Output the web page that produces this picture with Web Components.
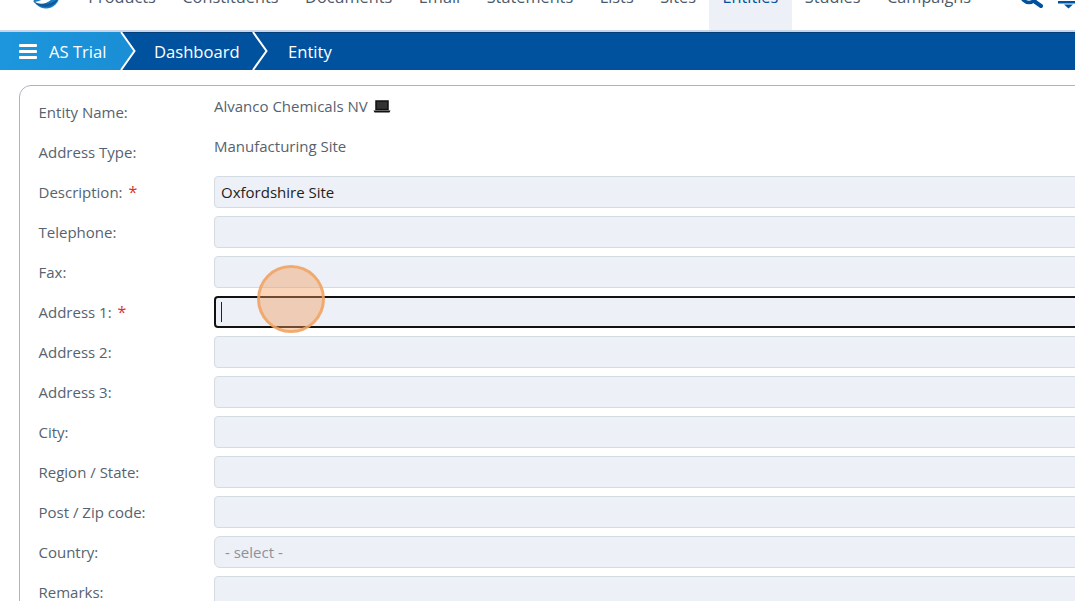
<!DOCTYPE html>
<html><head><meta charset="utf-8">
<style>
html,body{margin:0;padding:0;height:601px;overflow:hidden;background:#fff;font-family:"Open Sans",sans-serif;}
</style></head>
<body>
<app-shell>
<top-nav>
<nav-link>Products</nav-link><nav-link>Constituents</nav-link><nav-link>Documents</nav-link><nav-link>Email</nav-link><nav-link>Statements</nav-link><nav-link>Lists</nav-link><nav-link>Sites</nav-link><nav-link active>Entities</nav-link><nav-link>Studies</nav-link><nav-link>Campaigns</nav-link>
</top-nav>
<crumb-bar></crumb-bar>
<form-card>
<form-row label="Entity Name:" kind="text" value="Alvanco Chemicals NV" laptop></form-row>
<form-row label="Address Type:" kind="text" value="Manufacturing Site"></form-row>
<form-row label="Description:" required value="Oxfordshire Site"></form-row>
<form-row label="Telephone:"></form-row>
<form-row label="Fax:"></form-row>
<form-row label="Address 1:" required focused></form-row>
<form-row label="Address 2:"></form-row>
<form-row label="Address 3:"></form-row>
<form-row label="City:"></form-row>
<form-row label="Region / State:"></form-row>
<form-row label="Post / Zip code:"></form-row>
<form-row label="Country:" placeholder="- select -"></form-row>
<form-row label="Remarks:"></form-row>
</form-card>
</app-shell>
<click-ring></click-ring>
<script>
function def(name, html){
  customElements.define(name, class extends HTMLElement{
    connectedCallback(){
      if(this.shadowRoot) return;
      const r=this.attachShadow({mode:'open'});
      r.innerHTML=typeof html==='function'?html(this):html;
    }
  });
}
def('app-shell',`<style>:host{display:flex;flex-direction:column;height:601px;overflow:hidden}</style><slot></slot>`);
def('top-nav',`<style>
:host{display:flex;flex:none;height:30px;border-bottom:2px solid #c8d5e6;position:relative;overflow:hidden;background:#fff}
.logo{flex:none;width:75px;display:flex;justify-content:flex-end}
.logo svg{margin:-19px 15px 0 0;flex:none}
.links{display:flex;height:30px}
.tools{margin-left:auto;display:flex;gap:14px;align-items:flex-start;margin-right:-3px}
.tools svg{flex:none}
</style>
<div class="logo"><svg width="28" height="28" viewBox="0 0 28 28"><circle cx="14" cy="14" r="13.5" fill="#1b7cc2"/><path d="M1 20C6 27 22 30 27 16 22 23 12 25 1 20Z" fill="#0e5a9c"/><path d="M3 21C10 20 18 15 23 4 25 8 24 14 20 18 15 23 8 24 3 21Z" fill="#fff"/></svg></div>
<div class="links"><slot></slot></div>
<div class="tools">
<svg width="24" height="9" viewBox="0 0 24 9"><circle cx="9" cy="-5" r="7.5" fill="none" stroke="#00529f" stroke-width="3.5"/><path d="M14 1L21 6" stroke="#00529f" stroke-width="4" stroke-linecap="round"/></svg>
<svg width="20" height="9" viewBox="0 0 20 9"><path d="M0 1H20V3.5H0Z" fill="#00529f"/><path d="M6 4.5H15L10.5 8.5Z" fill="#00529f"/></svg>
</div>`);
def('nav-link',el=>`<style>
:host{display:block;height:30px;padding:0 13.27px;font-size:16.3px;line-height:20px;color:${el.hasAttribute('active')?'#00529f':'#4a5a6a'};background:${el.hasAttribute('active')?'#edf0f6':'transparent'}}
div{margin-top:-13px;white-space:nowrap}
</style><div><slot></slot></div>`);
def('crumb-bar',`<style>
:host{display:flex;flex:none;height:38px;background:#00529f;color:#fff;font-size:16.6px;align-items:stretch;box-shadow:inset 0 1px 1px rgba(0,0,0,.25)}
.c{display:flex;align-items:center;padding-top:1px;box-sizing:border-box}
.first{background:linear-gradient(90deg,#1c96dc,#1a8fd6);width:120px;padding-left:19px;gap:12px}
.chev{flex:none;display:block}
.dash{margin-left:18px;width:100px}
.ent{margin-left:20px}
</style>
<div class="c first"><svg width="18" height="15" viewBox="0 0 18 15"><rect y="0" width="18" height="3" rx="1" fill="#fff"/><rect y="6" width="18" height="3" rx="1" fill="#fff"/><rect y="12" width="18" height="3" rx="1" fill="#fff"/></svg><span>AS Trial</span></div>
<svg class="chev" width="16" height="38" viewBox="0 0 16 38"><path d="M0 0L14 19 0 38Z" fill="#1a8fd6"/><path d="M1 0L14.5 19 1 38" fill="none" stroke="#fff" stroke-width="2"/></svg>
<div class="c dash">Dashboard</div>
<svg class="chev" width="16" height="38" viewBox="0 0 16 38" style="margin-left:-2px"><path d="M1 0L14.5 19 1 38" fill="none" stroke="#fff" stroke-width="2"/></svg>
<div class="c ent">Entity</div>`);
def('form-card',`<style>
:host{display:block;flex:none;margin:15px -30px 0 19px;padding:10px 0 0 18.5px;border:1px solid #a9b4c0;border-radius:12px}
</style><slot></slot>`);
def('form-row',el=>{
  const a=n=>el.getAttribute(n), has=n=>el.hasAttribute(n);
  const star=has('required')?'<b>*</b>':'';
  let f;
  if(a('kind')==='text'){
    f=`<div class="val">${a('value')}${has('laptop')?` <svg width="18" height="13" viewBox="0 0 18 13"><path d="M3 1H15V9.5H3Z" fill="#333" stroke="#111" stroke-width="1.5"/><path d="M0.5 10.5H17.5L16.5 12.5H1.5Z" fill="#111"/></svg>`:''}</div>`;
  } else {
    const inner=has('focused')?'<i></i>':(a('placeholder')?`<span class="ph">${a('placeholder')}</span>`:(a('value')||''));
    f=`<div class="in ${has('focused')?'foc':''} ${a('placeholder')?'sel':''}">${inner}</div>`;
  }
  return `<style>
:host{display:grid;grid-template-columns:175.5px 1fr;height:32px;margin-bottom:8px;font-size:15px;line-height:33px;color:#56636f}
.lab{white-space:nowrap}
b{font-weight:400;color:#d9302c;margin-left:6px;font-size:16px}
.val{line-height:21px;color:#56636f}
.val svg{vertical-align:-1px;margin-left:1px}
.in{box-sizing:border-box;height:32px;border:1px solid #d5dbe3;border-radius:4px;background:#edf0f6;padding:0 6px;color:#222;line-height:31px;display:flex;align-items:center;white-space:nowrap}
.in.sel{padding-left:10px;border-radius:6px}
.ph{color:#8b929a}
.foc{border:2px solid #111;padding:0 5px}
i{display:block;width:1px;height:20px;background:#222}
</style><div class="lab">${a('label')}${star}</div>${f}`;
});
def('click-ring',`<style>
:host{position:fixed;left:257px;top:265px;width:68px;height:68px;box-sizing:border-box;border-radius:50%;border:3px solid rgba(240,165,100,.85);background:rgba(242,155,90,.42)}
</style>`);
</script>
</body></html>
